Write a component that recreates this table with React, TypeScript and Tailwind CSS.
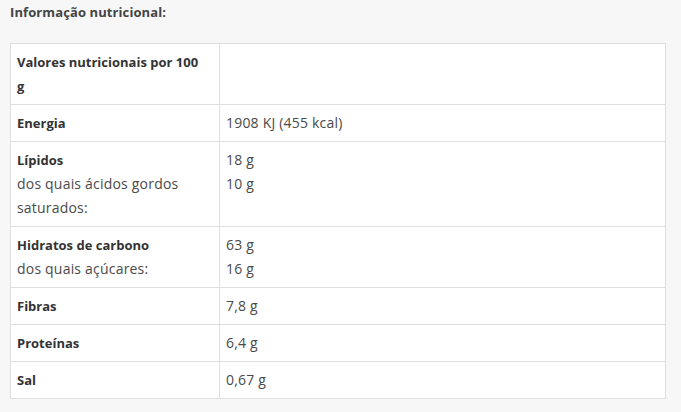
export default function App() {
  const font = { fontFamily: '"Open Sans", "Liberation Sans", sans-serif' };
  const cellL = "border border-[#dedede] pl-[6px] pr-[7px] py-[6px] align-top text-[#333] font-bold";
  const cellR = "border border-[#dedede] pl-[6px] pr-[7px] py-[6px] align-top text-[#4a4a4a] text-[14px] tracking-[0.2px]";
  const sub = "font-normal text-[#4a4a4a] text-[14px] tracking-[0.2px]";
  return (
    <div className="w-[681px] h-[412px] bg-[#f7f7f7] pl-[10px] text-[13px] leading-[24px]" style={font}>
      <div className="font-bold text-[#444] tracking-[0.1px]">Informação nutricional:</div>
      <table className="mt-[19px] border-collapse bg-white w-[656px] table-fixed">
        <colgroup>
          <col className="w-[209px]" />
          <col />
        </colgroup>
        <tbody>
          <tr>
            <td className={cellL}>Valores nutricionais por 100<br />g</td>
            <td className={cellR}></td>
          </tr>
          <tr>
            <td className={cellL}>Energia</td>
            <td className={cellR}>1908 KJ (455 kcal)</td>
          </tr>
          <tr>
            <td className={cellL}>
              Lípidos
              <div className={sub}>dos quais ácidos gordos<br />saturados:</div>
            </td>
            <td className={cellR}>18 g<br />10 g</td>
          </tr>
          <tr>
            <td className={cellL}>
              Hidratos de carbono
              <div className={sub}>dos quais açúcares:</div>
            </td>
            <td className={cellR}>63 g<br />16 g</td>
          </tr>
          <tr>
            <td className={cellL}>Fibras</td>
            <td className={cellR}>7,8 g</td>
          </tr>
          <tr>
            <td className={cellL}>Proteínas</td>
            <td className={cellR}>6,4 g</td>
          </tr>
          <tr>
            <td className={cellL}>Sal</td>
            <td className={cellR}>0,67 g</td>
          </tr>
        </tbody>
      </table>
    </div>
  );
}
